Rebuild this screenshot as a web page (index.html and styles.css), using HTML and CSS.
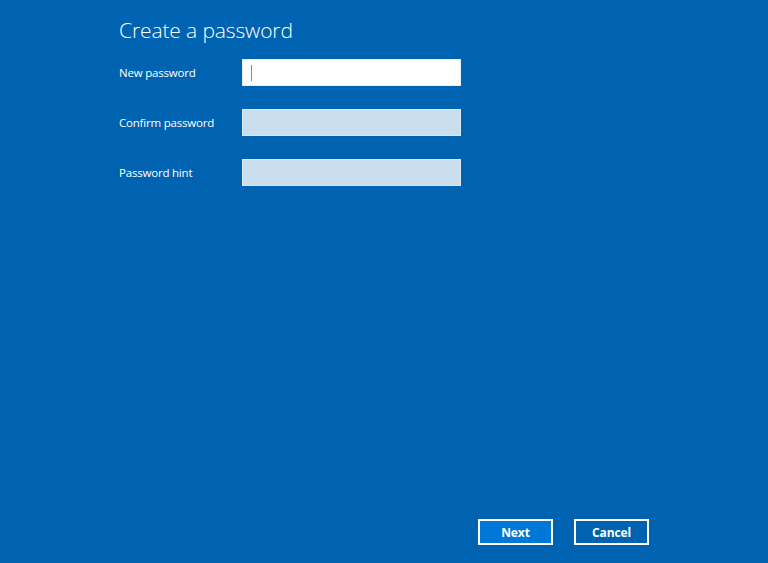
FILE: index.html
```html
<!DOCTYPE html>
<html lang="en">
<head>
<meta charset="utf-8">
<title>Create a password</title>
<link rel="stylesheet" href="styles.css">
</head>
<body>
<div class="page">
  <main class="content">
    <h1 class="title">Create a password</h1>
    <div class="form">
      <div class="row">
        <label class="label">New password</label>
        <div class="field field-active"><span class="caret"></span></div>
      </div>
      <div class="row">
        <label class="label">Confirm password</label>
        <div class="field"></div>
      </div>
      <div class="row">
        <label class="label">Password hint</label>
        <div class="field"></div>
      </div>
    </div>
  </main>
  <footer class="footer">
    <button class="btn btn-primary">Next</button>
    <button class="btn">Cancel</button>
  </footer>
</div>
</body>
</html>
```
FILE: styles.css
```css
html, body {
  margin: 0;
  padding: 0;
}
body {
  background: #0063b1;
  color: #ffffff;
  font-family: "Open Sans", "Noto Sans", sans-serif;
}
.page {
  width: 768px;
  height: 563px;
  display: flex;
  flex-direction: column;
  box-sizing: border-box;
}
.content {
  padding: 16px 0 0 119px;
}
.title {
  margin: 0;
  font-weight: 300;
  font-size: 21px;
  line-height: 28px;
  letter-spacing: -0.12px;
}
.form {
  margin-top: 15px;
  display: flex;
  flex-direction: column;
  gap: 23px;
}
.row {
  display: flex;
  align-items: center;
  height: 27px;
}
.label {
  width: 123px;
  font-size: 11.5px;
  line-height: 16px;
  letter-spacing: -0.2px;
}
.field {
  width: 219px;
  height: 27px;
  box-sizing: border-box;
  background: #c9dff0;
  border: 1px solid #dce9f5;
  display: flex;
  align-items: center;
  padding-left: 8px;
}
.field-active {
  background: #ffffff;
  border-color: #e6eef6;
}
.caret {
  width: 1px;
  height: 16px;
  background: #8a8a8a;
}
.footer {
  margin-top: auto;
  display: flex;
  justify-content: flex-end;
  gap: 21px;
  padding: 0 119px 18px 0;
}
.btn {
  width: 75px;
  height: 26px;
  box-sizing: border-box;
  border: 2px solid #ffffff;
  background: transparent;
  color: #ffffff;
  font-family: "Open Sans", "Noto Sans", sans-serif;
  font-weight: 700;
  font-size: 12px;
  letter-spacing: -0.1px;
  padding: 0;
}
.btn-primary {
  background: #0078d7;
}
```
